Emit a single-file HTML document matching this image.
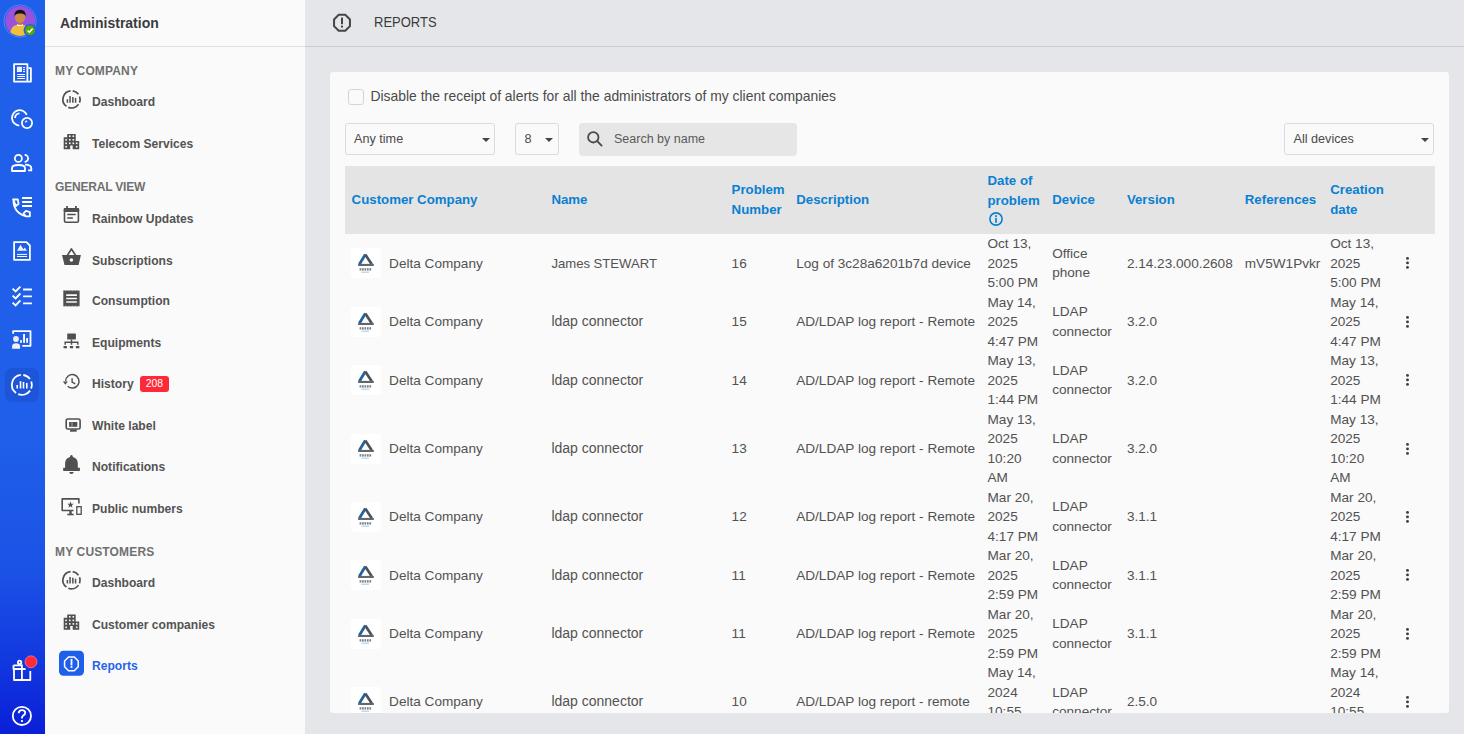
<!DOCTYPE html>
<html><head><meta charset="utf-8">
<style>
*{box-sizing:border-box;margin:0;padding:0}
html,body{width:1464px;height:734px;overflow:hidden}
body{font-family:"Liberation Sans",sans-serif;background:#e5e6ea;position:relative;color:#4a4a4a}
.rail{position:absolute;left:0;top:0;width:45px;height:734px;background:linear-gradient(to bottom,#1f5fe9 0%,#1f5fe9 60%,#1b52e6 78%,#1238df 90%,#0a1fd8 100%)}
.rail svg{position:absolute}
.side{position:absolute;left:45px;top:0;width:260px;height:734px;background:#fafafa}
.side .hd{position:absolute;left:0;top:0;width:260px;height:47px;border-bottom:1px solid #e3e3e3}
.side .hd span{position:absolute;left:15px;top:15px;font-weight:bold;font-size:14px;color:#3c3c3c;line-height:17px;transform:scaleY(1.07);transform-origin:0 13.3px}
.sec{position:absolute;left:10px;font-weight:bold;font-size:12px;letter-spacing:0.15px;color:#707070;line-height:14px;white-space:nowrap;transform:scaleY(1.05);transform-origin:0 11px}
.it{position:absolute;left:47px;font-weight:bold;font-size:12.1px;color:#535353;line-height:14px;white-space:nowrap;transform:scaleY(1.12);transform-origin:0 11px}
.side svg{position:absolute}
.main{position:absolute;left:305px;top:0;width:1159px;height:734px}
.mhd{position:absolute;left:0;top:0;width:1159px;height:47px;border-bottom:1px solid #c9cace}
.mhd span{position:absolute;left:69px;top:16px;font-size:13px;color:#3c3c3c;line-height:14px;letter-spacing:0;transform:scaleY(1.1);transform-origin:0 11px}
.card{position:absolute;left:25px;top:72px;width:1119px;height:641px;background:#fafafa;border-radius:3px;overflow:hidden}

.chk{position:absolute;left:18px;top:17px;width:16px;height:16px;border:1px solid #d4d4d4;border-radius:3px;background:#fafafa}
.lbl{position:absolute;left:40.5px;top:16.4px;font-size:13.9px;line-height:17px;color:#4a4a4a;white-space:nowrap}
.sel{position:absolute;top:51px;height:32px;border:1px solid #dcdcdc;border-radius:3px;background:#fafafa}
.sel span{position:absolute;left:8px;top:7.6px;font-size:12.65px;line-height:15px;color:#4a4a4a;white-space:nowrap}
.sel i{position:absolute;top:14px;width:0;height:0;border-left:4px solid transparent;border-right:4px solid transparent;border-top:4.5px solid #444}
.srch{position:absolute;left:249px;top:51px;width:218px;height:32.5px;background:#e6e6e6;border-radius:4px}
.srch span{position:absolute;left:35px;top:9px;font-size:12.5px;line-height:15px;color:#5a5a5a;white-space:nowrap}
.srch svg{position:absolute;left:8px;top:8px}
.tbl{position:absolute;left:15px;top:94px;width:1090px;height:620px}
.th{position:absolute;left:0;top:0;width:1090px;height:68px;background:#e4e4e4}
.th .c{position:absolute;top:0;height:68px;display:flex;align-items:center;font-weight:bold;font-size:13.25px;line-height:19.6px;color:#0a80d2;white-space:nowrap}
.row{position:absolute;left:0;width:1090px}
.row .c{position:absolute;top:0;bottom:0;display:flex;align-items:center;font-size:13.6px;line-height:19.5px;color:#525252;white-space:nowrap}
.logo{display:block;flex:none}
.dots{display:block;width:5px;height:13px;position:relative}
.dots b{position:absolute;left:1.1px;width:2.9px;height:2.9px;border-radius:50%;background:#3d3d3d}
.dots b:nth-child(1){top:0.2px}.dots b:nth-child(2){top:4.7px}.dots b:nth-child(3){top:9.2px}
.ov{position:absolute;left:0;top:0;pointer-events:none}
</style></head><body>
<div class="rail"></div>
<div class="side">
  <div class="hd"><span>Administration</span></div>
  <div class="sec" style="top:63.7px">MY COMPANY</div>
  <div class="it" style="top:95.2px">Dashboard</div>
  <div class="it" style="top:137.1px">Telecom Services</div>
  <div class="sec" style="top:180.3px;letter-spacing:-0.2px">GENERAL VIEW</div>
  <div class="it" style="top:211.6px">Rainbow Updates</div>
  <div class="it" style="top:253.6px">Subscriptions</div>
  <div class="it" style="top:294.3px">Consumption</div>
  <div class="it" style="top:335.9px">Equipments</div>
  <div class="it" style="top:377.2px">History</div>
  <div style="position:absolute;left:95px;top:375.9px;width:28.9px;height:15.8px;background:#fe2a38;border-radius:3px;color:#fff;font-size:10.4px;line-height:12px;padding-top:2.4px;text-align:center">208</div>
  <div class="it" style="top:419.4px">White label</div>
  <div class="it" style="top:460.1px">Notifications</div>
  <div class="it" style="top:502.3px">Public numbers</div>
  <div class="sec" style="top:544.9px">MY CUSTOMERS</div>
  <div class="it" style="top:575.7px">Dashboard</div>
  <div class="it" style="top:618px">Customer companies</div>
  <div class="it" style="top:658.6px;color:#2563eb">Reports</div>
</div>
<div class="main">
  <div class="mhd"><span>REPORTS</span></div>
  <div class="card">
    <div class="chk"></div>
    <div class="lbl">Disable the receipt of alerts for all the administrators of my client companies</div>
    <div class="sel" style="left:15px;width:150px"><span>Any time</span><i style="left:136px"></i></div>
    <div class="sel" style="left:185px;width:44px"><span style="left:8.5px">8</span><i style="left:29.2px"></i></div>
    <div class="srch"><svg width="16" height="16" viewBox="0 0 16 16"><circle cx="6.3" cy="6.3" r="5.2" fill="none" stroke="#4a4a4a" stroke-width="1.8"/><path d="M10.2 10.2 L14.6 14.6" stroke="#4a4a4a" stroke-width="1.9" stroke-linecap="round"/></svg><span>Search by name</span></div>
    <div class="sel" style="left:954px;width:150px"><span style="left:8.5px">All devices</span><i style="left:136px"></i></div>
    <div class="tbl">
      <div class="th">
        <div class="c" style="left:6.6px">Customer Company</div>
        <div class="c" style="left:206.4px">Name</div>
        <div class="c" style="left:386.6px">Problem<br>Number</div>
        <div class="c" style="left:451.2px">Description</div>
        <div class="c" style="left:642.5px"><div style="position:relative;top:-1.5px">Date of<br>problem<svg width="14" height="14" viewBox="0 0 14 14" style="display:block;margin:2px 0 0 1px"><circle cx="7" cy="7" r="6.1" fill="none" stroke="#0a80d2" stroke-width="1.6"/><rect x="6.15" y="3.2" width="1.7" height="1.8" fill="#0a80d2"/><rect x="6.15" y="5.9" width="1.7" height="4.9" fill="#0a80d2"/></svg></div></div>
        <div class="c" style="left:707.2px">Device</div>
        <div class="c" style="left:781.9px">Version</div>
        <div class="c" style="left:899.8px">References</div>
        <div class="c" style="left:985.2px">Creation<br>date</div>
      </div>
<div class="row" style="top:68.00px;height:58.50px"><div class="c" style="left:6.1px"><svg class="logo" width="30" height="30" viewBox="0 0 30 30"><rect width="30" height="30" rx="3" fill="#fff"/><path d="M8.4 16.2 L14.3 6.6" stroke="#23629e" stroke-width="2.8" fill="none"/><path d="M14.3 6.6 L20.7 16.2" stroke="#49525b" stroke-width="2.7" fill="none"/><rect x="7.1" y="15.9" width="15.7" height="2.1" fill="#62676c"/><rect x="8.60" y="20.2" width="1.7" height="2.4" fill="#7d8186"/><rect x="11.05" y="20.2" width="1.7" height="2.4" fill="#7d8186"/><rect x="13.50" y="20.2" width="1.7" height="2.4" fill="#7d8186"/><rect x="15.95" y="20.2" width="1.7" height="2.4" fill="#7d8186"/><rect x="18.40" y="20.2" width="1.7" height="2.4" fill="#7d8186"/><rect x="10.4" y="23.6" width="7.6" height="1.2" fill="#b0d2ea"/></svg><span style="margin-left:8px">Delta Company</span></div><div class="c" style="left:206.4px;font-size:13.1px">James STEWART</div><div class="c " style="left:386.6px">16</div><div class="c " style="left:451.2px">Log of 3c28a6201b7d device</div><div class="c " style="left:642.5px">Oct 13,<br>2025<br>5:00 PM</div><div class="c " style="left:707.2px">Office<br>phone</div><div class="c " style="left:781.9px">2.14.23.000.2608</div><div class="c " style="left:899.8px">mV5W1Pvkr</div><div class="c " style="left:985.2px">Oct 13,<br>2025<br>5:00 PM</div><div class="c" style="left:1059.8px"><svg width="6" height="14" viewBox="0 0 6 14" style="display:block"><circle cx="2.5" cy="2.4" r="1.45" fill="#3d3d3d"/><circle cx="2.5" cy="6.9" r="1.45" fill="#3d3d3d"/><circle cx="2.5" cy="11.4" r="1.45" fill="#3d3d3d"/></svg></div></div>
<div class="row" style="top:126.50px;height:58.50px"><div class="c" style="left:6.1px"><svg class="logo" width="30" height="30" viewBox="0 0 30 30"><rect width="30" height="30" rx="3" fill="#fff"/><path d="M8.4 16.2 L14.3 6.6" stroke="#23629e" stroke-width="2.8" fill="none"/><path d="M14.3 6.6 L20.7 16.2" stroke="#49525b" stroke-width="2.7" fill="none"/><rect x="7.1" y="15.9" width="15.7" height="2.1" fill="#62676c"/><rect x="8.60" y="20.2" width="1.7" height="2.4" fill="#7d8186"/><rect x="11.05" y="20.2" width="1.7" height="2.4" fill="#7d8186"/><rect x="13.50" y="20.2" width="1.7" height="2.4" fill="#7d8186"/><rect x="15.95" y="20.2" width="1.7" height="2.4" fill="#7d8186"/><rect x="18.40" y="20.2" width="1.7" height="2.4" fill="#7d8186"/><rect x="10.4" y="23.6" width="7.6" height="1.2" fill="#b0d2ea"/></svg><span style="margin-left:8px">Delta Company</span></div><div class="c" style="left:206.4px;font-size:14.0px">ldap connector</div><div class="c " style="left:386.6px">15</div><div class="c " style="left:451.2px">AD/LDAP log report - Remote</div><div class="c " style="left:642.5px">May 14,<br>2025<br>4:47 PM</div><div class="c " style="left:707.2px">LDAP<br>connector</div><div class="c " style="left:781.9px">3.2.0</div><div class="c " style="left:985.2px">May 14,<br>2025<br>4:47 PM</div><div class="c" style="left:1059.8px"><svg width="6" height="14" viewBox="0 0 6 14" style="display:block"><circle cx="2.5" cy="2.4" r="1.45" fill="#3d3d3d"/><circle cx="2.5" cy="6.9" r="1.45" fill="#3d3d3d"/><circle cx="2.5" cy="11.4" r="1.45" fill="#3d3d3d"/></svg></div></div>
<div class="row" style="top:185.00px;height:58.50px"><div class="c" style="left:6.1px"><svg class="logo" width="30" height="30" viewBox="0 0 30 30"><rect width="30" height="30" rx="3" fill="#fff"/><path d="M8.4 16.2 L14.3 6.6" stroke="#23629e" stroke-width="2.8" fill="none"/><path d="M14.3 6.6 L20.7 16.2" stroke="#49525b" stroke-width="2.7" fill="none"/><rect x="7.1" y="15.9" width="15.7" height="2.1" fill="#62676c"/><rect x="8.60" y="20.2" width="1.7" height="2.4" fill="#7d8186"/><rect x="11.05" y="20.2" width="1.7" height="2.4" fill="#7d8186"/><rect x="13.50" y="20.2" width="1.7" height="2.4" fill="#7d8186"/><rect x="15.95" y="20.2" width="1.7" height="2.4" fill="#7d8186"/><rect x="18.40" y="20.2" width="1.7" height="2.4" fill="#7d8186"/><rect x="10.4" y="23.6" width="7.6" height="1.2" fill="#b0d2ea"/></svg><span style="margin-left:8px">Delta Company</span></div><div class="c" style="left:206.4px;font-size:14.0px">ldap connector</div><div class="c " style="left:386.6px">14</div><div class="c " style="left:451.2px">AD/LDAP log report - Remote</div><div class="c " style="left:642.5px">May 13,<br>2025<br>1:44 PM</div><div class="c " style="left:707.2px">LDAP<br>connector</div><div class="c " style="left:781.9px">3.2.0</div><div class="c " style="left:985.2px">May 13,<br>2025<br>1:44 PM</div><div class="c" style="left:1059.8px"><svg width="6" height="14" viewBox="0 0 6 14" style="display:block"><circle cx="2.5" cy="2.4" r="1.45" fill="#3d3d3d"/><circle cx="2.5" cy="6.9" r="1.45" fill="#3d3d3d"/><circle cx="2.5" cy="11.4" r="1.45" fill="#3d3d3d"/></svg></div></div>
<div class="row" style="top:243.50px;height:78.00px"><div class="c" style="left:6.1px"><svg class="logo" width="30" height="30" viewBox="0 0 30 30"><rect width="30" height="30" rx="3" fill="#fff"/><path d="M8.4 16.2 L14.3 6.6" stroke="#23629e" stroke-width="2.8" fill="none"/><path d="M14.3 6.6 L20.7 16.2" stroke="#49525b" stroke-width="2.7" fill="none"/><rect x="7.1" y="15.9" width="15.7" height="2.1" fill="#62676c"/><rect x="8.60" y="20.2" width="1.7" height="2.4" fill="#7d8186"/><rect x="11.05" y="20.2" width="1.7" height="2.4" fill="#7d8186"/><rect x="13.50" y="20.2" width="1.7" height="2.4" fill="#7d8186"/><rect x="15.95" y="20.2" width="1.7" height="2.4" fill="#7d8186"/><rect x="18.40" y="20.2" width="1.7" height="2.4" fill="#7d8186"/><rect x="10.4" y="23.6" width="7.6" height="1.2" fill="#b0d2ea"/></svg><span style="margin-left:8px">Delta Company</span></div><div class="c" style="left:206.4px;font-size:14.0px">ldap connector</div><div class="c " style="left:386.6px">13</div><div class="c " style="left:451.2px">AD/LDAP log report - Remote</div><div class="c " style="left:642.5px">May 13,<br>2025<br>10:20<br>AM</div><div class="c " style="left:707.2px">LDAP<br>connector</div><div class="c " style="left:781.9px">3.2.0</div><div class="c " style="left:985.2px">May 13,<br>2025<br>10:20<br>AM</div><div class="c" style="left:1059.8px"><svg width="6" height="14" viewBox="0 0 6 14" style="display:block"><circle cx="2.5" cy="2.4" r="1.45" fill="#3d3d3d"/><circle cx="2.5" cy="6.9" r="1.45" fill="#3d3d3d"/><circle cx="2.5" cy="11.4" r="1.45" fill="#3d3d3d"/></svg></div></div>
<div class="row" style="top:321.50px;height:58.50px"><div class="c" style="left:6.1px"><svg class="logo" width="30" height="30" viewBox="0 0 30 30"><rect width="30" height="30" rx="3" fill="#fff"/><path d="M8.4 16.2 L14.3 6.6" stroke="#23629e" stroke-width="2.8" fill="none"/><path d="M14.3 6.6 L20.7 16.2" stroke="#49525b" stroke-width="2.7" fill="none"/><rect x="7.1" y="15.9" width="15.7" height="2.1" fill="#62676c"/><rect x="8.60" y="20.2" width="1.7" height="2.4" fill="#7d8186"/><rect x="11.05" y="20.2" width="1.7" height="2.4" fill="#7d8186"/><rect x="13.50" y="20.2" width="1.7" height="2.4" fill="#7d8186"/><rect x="15.95" y="20.2" width="1.7" height="2.4" fill="#7d8186"/><rect x="18.40" y="20.2" width="1.7" height="2.4" fill="#7d8186"/><rect x="10.4" y="23.6" width="7.6" height="1.2" fill="#b0d2ea"/></svg><span style="margin-left:8px">Delta Company</span></div><div class="c" style="left:206.4px;font-size:14.0px">ldap connector</div><div class="c " style="left:386.6px">12</div><div class="c " style="left:451.2px">AD/LDAP log report - Remote</div><div class="c " style="left:642.5px">Mar 20,<br>2025<br>4:17 PM</div><div class="c " style="left:707.2px">LDAP<br>connector</div><div class="c " style="left:781.9px">3.1.1</div><div class="c " style="left:985.2px">Mar 20,<br>2025<br>4:17 PM</div><div class="c" style="left:1059.8px"><svg width="6" height="14" viewBox="0 0 6 14" style="display:block"><circle cx="2.5" cy="2.4" r="1.45" fill="#3d3d3d"/><circle cx="2.5" cy="6.9" r="1.45" fill="#3d3d3d"/><circle cx="2.5" cy="11.4" r="1.45" fill="#3d3d3d"/></svg></div></div>
<div class="row" style="top:380.00px;height:58.50px"><div class="c" style="left:6.1px"><svg class="logo" width="30" height="30" viewBox="0 0 30 30"><rect width="30" height="30" rx="3" fill="#fff"/><path d="M8.4 16.2 L14.3 6.6" stroke="#23629e" stroke-width="2.8" fill="none"/><path d="M14.3 6.6 L20.7 16.2" stroke="#49525b" stroke-width="2.7" fill="none"/><rect x="7.1" y="15.9" width="15.7" height="2.1" fill="#62676c"/><rect x="8.60" y="20.2" width="1.7" height="2.4" fill="#7d8186"/><rect x="11.05" y="20.2" width="1.7" height="2.4" fill="#7d8186"/><rect x="13.50" y="20.2" width="1.7" height="2.4" fill="#7d8186"/><rect x="15.95" y="20.2" width="1.7" height="2.4" fill="#7d8186"/><rect x="18.40" y="20.2" width="1.7" height="2.4" fill="#7d8186"/><rect x="10.4" y="23.6" width="7.6" height="1.2" fill="#b0d2ea"/></svg><span style="margin-left:8px">Delta Company</span></div><div class="c" style="left:206.4px;font-size:14.0px">ldap connector</div><div class="c " style="left:386.6px">11</div><div class="c " style="left:451.2px">AD/LDAP log report - Remote</div><div class="c " style="left:642.5px">Mar 20,<br>2025<br>2:59 PM</div><div class="c " style="left:707.2px">LDAP<br>connector</div><div class="c " style="left:781.9px">3.1.1</div><div class="c " style="left:985.2px">Mar 20,<br>2025<br>2:59 PM</div><div class="c" style="left:1059.8px"><svg width="6" height="14" viewBox="0 0 6 14" style="display:block"><circle cx="2.5" cy="2.4" r="1.45" fill="#3d3d3d"/><circle cx="2.5" cy="6.9" r="1.45" fill="#3d3d3d"/><circle cx="2.5" cy="11.4" r="1.45" fill="#3d3d3d"/></svg></div></div>
<div class="row" style="top:438.50px;height:58.50px"><div class="c" style="left:6.1px"><svg class="logo" width="30" height="30" viewBox="0 0 30 30"><rect width="30" height="30" rx="3" fill="#fff"/><path d="M8.4 16.2 L14.3 6.6" stroke="#23629e" stroke-width="2.8" fill="none"/><path d="M14.3 6.6 L20.7 16.2" stroke="#49525b" stroke-width="2.7" fill="none"/><rect x="7.1" y="15.9" width="15.7" height="2.1" fill="#62676c"/><rect x="8.60" y="20.2" width="1.7" height="2.4" fill="#7d8186"/><rect x="11.05" y="20.2" width="1.7" height="2.4" fill="#7d8186"/><rect x="13.50" y="20.2" width="1.7" height="2.4" fill="#7d8186"/><rect x="15.95" y="20.2" width="1.7" height="2.4" fill="#7d8186"/><rect x="18.40" y="20.2" width="1.7" height="2.4" fill="#7d8186"/><rect x="10.4" y="23.6" width="7.6" height="1.2" fill="#b0d2ea"/></svg><span style="margin-left:8px">Delta Company</span></div><div class="c" style="left:206.4px;font-size:14.0px">ldap connector</div><div class="c " style="left:386.6px">11</div><div class="c " style="left:451.2px">AD/LDAP log report - Remote</div><div class="c " style="left:642.5px">Mar 20,<br>2025<br>2:59 PM</div><div class="c " style="left:707.2px">LDAP<br>connector</div><div class="c " style="left:781.9px">3.1.1</div><div class="c " style="left:985.2px">Mar 20,<br>2025<br>2:59 PM</div><div class="c" style="left:1059.8px"><svg width="6" height="14" viewBox="0 0 6 14" style="display:block"><circle cx="2.5" cy="2.4" r="1.45" fill="#3d3d3d"/><circle cx="2.5" cy="6.9" r="1.45" fill="#3d3d3d"/><circle cx="2.5" cy="11.4" r="1.45" fill="#3d3d3d"/></svg></div></div>
<div class="row" style="top:497.00px;height:78.00px"><div class="c" style="left:6.1px"><svg class="logo" width="30" height="30" viewBox="0 0 30 30"><rect width="30" height="30" rx="3" fill="#fff"/><path d="M8.4 16.2 L14.3 6.6" stroke="#23629e" stroke-width="2.8" fill="none"/><path d="M14.3 6.6 L20.7 16.2" stroke="#49525b" stroke-width="2.7" fill="none"/><rect x="7.1" y="15.9" width="15.7" height="2.1" fill="#62676c"/><rect x="8.60" y="20.2" width="1.7" height="2.4" fill="#7d8186"/><rect x="11.05" y="20.2" width="1.7" height="2.4" fill="#7d8186"/><rect x="13.50" y="20.2" width="1.7" height="2.4" fill="#7d8186"/><rect x="15.95" y="20.2" width="1.7" height="2.4" fill="#7d8186"/><rect x="18.40" y="20.2" width="1.7" height="2.4" fill="#7d8186"/><rect x="10.4" y="23.6" width="7.6" height="1.2" fill="#b0d2ea"/></svg><span style="margin-left:8px">Delta Company</span></div><div class="c" style="left:206.4px;font-size:14.0px">ldap connector</div><div class="c " style="left:386.6px">10</div><div class="c " style="left:451.2px">AD/LDAP log report - remote</div><div class="c " style="left:642.5px">May 14,<br>2024<br>10:55<br>AM</div><div class="c " style="left:707.2px">LDAP<br>connector</div><div class="c " style="left:781.9px">2.5.0</div><div class="c " style="left:985.2px">May 14,<br>2024<br>10:55<br>AM</div><div class="c" style="left:1059.8px"><svg width="6" height="14" viewBox="0 0 6 14" style="display:block"><circle cx="2.5" cy="2.4" r="1.45" fill="#3d3d3d"/><circle cx="2.5" cy="6.9" r="1.45" fill="#3d3d3d"/><circle cx="2.5" cy="11.4" r="1.45" fill="#3d3d3d"/></svg></div></div>
    </div>
  </div>
</div>
<svg class="ov" width="1464" height="734" viewBox="0 0 1464 734"><circle cx="20" cy="21" r="16.2" fill="none" stroke="#4f86f2" stroke-width="1"/><clipPath id="avc"><circle cx="20.1" cy="20.9" r="15"/></clipPath><g clip-path="url(#avc)"><circle cx="20.1" cy="20.9" r="15" fill="#9a52de"/><path d="M9.8 37 Q9.8 26.2 16.5 25 L23.5 25 Q30.5 26.2 30.5 37 Z" fill="#efc03c"/><path d="M16.8 24.9 Q20 27.3 23.2 24.9 L22.4 24 L17.6 24 Z" fill="#fff"/><rect x="18.2" y="20.5" width="3.8" height="4.4" fill="#b9743e"/><ellipse cx="20.1" cy="17.2" rx="5.2" ry="5.6" fill="#cc8a4c"/><path d="M14.6 16.6 Q13.9 9.7 20.1 9.7 Q26.3 9.7 25.6 16.6 Q25 13.2 20.1 13.4 Q15.2 13.2 14.6 16.6 Z" fill="#141414"/></g><circle cx="30" cy="30.3" r="6.4" fill="#1f5fe9"/><circle cx="30" cy="30.3" r="4.9" fill="#5aa700"/><path d="M27.6 30.5 L29.4 32.2 L32.6 28.6" stroke="#fff" stroke-width="1.5" fill="none"/><path d="M14.1 64.1 H27.4 V81.7 H14.1 Z" stroke="#fff" fill="none" stroke-width="1.8" stroke-width="2" stroke-linejoin="round"/><path d="M28.4 68.2 H30.9 V81.7 H28" stroke="#fff" fill="none" stroke-width="1.8" stroke-width="2" stroke-linejoin="round"/><rect x="17.3" y="67.1" width="4.3" height="4.5" fill="#f0f0f0" stroke="#fff" stroke-width="0.8"/><path d="M23 67.6 H25 M23 69.6 H25 M23 71.6 H25 M17.2 74.5 H25 M17.2 76.5 H25 M17.2 78.5 H25" stroke="#fff" stroke-width="1"/><path d="M19.30 125.59A7.70 7.70 0 1 1 26.79 114.89" stroke="#fff" fill="none" stroke-width="1.8" transform="rotate(0)"/><path d="M15.10 117.90A4.60 4.60 0 0 1 19.54 113.30" stroke="#fff" fill="none" stroke-width="1.8" stroke-width="1.6"/><circle cx="27" cy="123" r="5.1" stroke="#fff" fill="none" stroke-width="1.8"/><path d="M25.2 122.3 L27 120.7" stroke="#fff" stroke-width="1.5"/><circle cx="18.4" cy="158.4" r="3.5" stroke="#fff" fill="none" stroke-width="1.8"/><path d="M12 171 V168.2 Q12 165 18.5 165 Q25 165 25 168.2 V171 Z" stroke="#fff" fill="none" stroke-width="1.8" stroke-linejoin="round"/><path d="M24.6 154.9 A3.5 3.5 0 0 1 24.6 161.9" stroke="#fff" fill="none" stroke-width="1.8"/><path d="M25 164.6 Q31.3 164.8 31.3 168 V170.4 H28.1" stroke="#fff" fill="none" stroke-width="1.8"/><path d="M22.1 198 H32 M22.1 202 H32 M22.1 206 H32" stroke="#fff" stroke-width="1.8"/><path d="M13.1 199.3 L17.8 199.5 L18.6 203.8 L15.9 206 Z" stroke="#fff" fill="none" stroke-width="1.8" stroke-width="1.7" stroke-linejoin="round"/><path d="M23.6 213.4 L25.9 210.9 L29.9 212.2 L29.9 216.3 L25.6 216.3 Z" stroke="#fff" fill="none" stroke-width="1.8" stroke-width="1.7" stroke-linejoin="round"/><path d="M13.4 201 Q13.8 208.8 18.8 212.8 Q22 215.6 26 216" stroke="#fff" fill="none" stroke-width="1.8" stroke-width="2.3"/><path d="M14.1 242.1 H26.5 L29.9 245.5 V259.9 H14.1 Z" stroke="#fff" fill="none" stroke-width="1.8" stroke-width="2" stroke-linejoin="round"/><path d="M17 250.8 L20.5 244.8 L23.4 249.2 L24.8 247.4 L27 250.8 Z" fill="#f2f2f2"/><path d="M17 254.4 H27 M17 256.5 H27" stroke="#fff" stroke-width="1"/><path d="M12.6 288.6 L15.6 291.4 L20.4 286.6 M12.6 295.6 L15.6 298.4 L20.4 293.5 M12.6 302.6 L15.6 305.4 L20.4 300.4" stroke="#fff" fill="none" stroke-width="1.9"/><path d="M23.1 289.5 H31.9 M23.1 296.4 H31.9 M23.1 303.4 H31.9" stroke="#fff" stroke-width="1.9"/><path d="M13.1 333.8 V331.1 H30.5 V345.8 H22.3" stroke="#fff" fill="none" stroke-width="1.8" stroke-width="1.9" stroke-linejoin="round"/><circle cx="16" cy="339" r="2.9" fill="#f0f0f0"/><path d="M12.1 348.7 V346.5 Q12.1 343.2 16.1 343.2 Q20.1 343.2 20.1 346.5 V348.7 Z" fill="#f0f0f0"/><rect x="20.1" y="340.1" width="1.8" height="2.7" fill="#fff"/><rect x="23.1" y="334" width="1.9" height="8.8" fill="#fff"/><rect x="26.2" y="338.1" width="1.8" height="4.7" fill="#fff"/><rect x="5" y="368" width="34" height="34" rx="7" fill="#1d55d8"/><path d="M16.02 392.99A10.00 10.00 0 0 1 20.85 374.95M30.09 390.64A10.00 10.00 0 0 1 18.15 394.17M31.30 381.48A10.00 10.00 0 0 1 31.17 388.65M23.29 375.00A10.00 10.00 0 0 1 29.99 379.02" stroke="#fff" fill="none" stroke-width="1.8"/><path d="M17.2 385.1 V388.6 M20.5 381.2 V388.6 M23.5 382.1 V388.6 M26.8 383 V388.6" stroke="#fff" stroke-width="1.6"/><path d="M13.5 665.3 H22 M13.5 665.3 V669 H21.9 M14 669.5 V680 H30.3 V671.1 M21.9 664.5 V680 M21.9 669 H25.6" stroke="#fff" fill="none" stroke-width="1.8" stroke-width="1.8" stroke-linejoin="round"/><circle cx="19.6" cy="662.4" r="1.7" stroke="#fff" fill="none" stroke-width="1.8" stroke-width="1.4"/><circle cx="31" cy="661.8" r="6" fill="#ff2b3a" stroke="#ffb0b5" stroke-width="0.5"/><circle cx="21.9" cy="715.9" r="9.1" stroke="#fff" fill="none" stroke-width="1.8"/><path d="M18.7 713.3 Q18.9 710.1 22 710.1 Q25.2 710.1 25.2 712.8 Q25.2 714.6 23.2 715.6 Q21.9 716.4 21.9 718.4" stroke="#fff" fill="none" stroke-width="1.8"/><rect x="21" y="720.1" width="1.9" height="1.9" fill="#fff"/><path d="M66.45 106.36A8.60 8.60 0 0 1 70.60 90.85M78.54 104.33A8.60 8.60 0 0 1 68.28 107.37M79.58 96.46A8.60 8.60 0 0 1 79.47 102.62M72.70 90.88A8.60 8.60 0 0 1 78.46 94.35" stroke="#505050" fill="none" stroke-width="1.7"/><path d="M67.4 99.2 V102.8M70.05 96.1 V102.8M72.85 96.9 V102.8M75.55 98.0 V102.8" stroke="#505050" fill="none" stroke-width="1.5"/><path d="M63.7 137.2 H67.2 V133.9 H75.7 V141 H79.2 V149.2 H72.7 V145.5 H70.2 V149.2 H63.7 Z" fill="#505050"/><rect x="69.0" y="135.4" width="1.6" height="1.6" fill="#fafafa"/><rect x="72.5" y="135.4" width="1.6" height="1.6" fill="#fafafa"/><rect x="65.3" y="139.0" width="1.6" height="1.6" fill="#fafafa"/><rect x="69.0" y="139.0" width="1.6" height="1.6" fill="#fafafa"/><rect x="72.5" y="139.0" width="1.6" height="1.6" fill="#fafafa"/><rect x="65.3" y="142.5" width="1.6" height="1.6" fill="#fafafa"/><rect x="69.0" y="142.5" width="1.6" height="1.6" fill="#fafafa"/><rect x="72.5" y="142.5" width="1.6" height="1.6" fill="#fafafa"/><rect x="75.9" y="142.5" width="1.6" height="1.6" fill="#fafafa"/><rect x="65.3" y="145.9" width="1.6" height="1.6" fill="#fafafa"/><rect x="75.9" y="145.9" width="1.6" height="1.6" fill="#fafafa"/><rect x="64.5" y="208.7" width="13.9" height="13.6" rx="1.3" stroke="#505050" fill="none" stroke-width="1.6"/><rect x="63.7" y="207.9" width="15.5" height="4" rx="1" fill="#505050"/><rect x="66.2" y="206" width="1.7" height="2.5" fill="#505050"/><rect x="75" y="206" width="1.8" height="2.5" fill="#505050"/><path d="M67.2 214.4 H75.7 M67.2 218.1 H72.9" stroke="#505050" fill="none" stroke-width="1.5"/><path d="M62 255 H80.9 L78.6 265.1 H64.5 Z" fill="#505050"/><path d="M67.4 255.4 L71.4 249 L75.6 255.4" stroke="#505050" fill="none" stroke-width="1.7" stroke-linejoin="round"/><circle cx="71.4" cy="260" r="1.8" fill="#fafafa"/><path d="M63.3 290.4 H79.6 V306.4 H63.3 Z" fill="#505050"/><path d="M66.2 295.1 H76.9 M66.2 298.5 H76.9 M66.2 302 H76.9" stroke="#fafafa" stroke-width="1.6"/><path d="M64.93 290.4 l0.8 0.8 l0.8 -0.8 ZM68.19 290.4 l0.8 0.8 l0.8 -0.8 ZM71.45 290.4 l0.8 0.8 l0.8 -0.8 ZM74.71 290.4 l0.8 0.8 l0.8 -0.8 ZM77.97 290.4 l0.8 0.8 l0.8 -0.8 ZM64.93 306.4 l0.8 -0.8 l0.8 0.8 ZM68.19 306.4 l0.8 -0.8 l0.8 0.8 ZM71.45 306.4 l0.8 -0.8 l0.8 0.8 ZM74.71 306.4 l0.8 -0.8 l0.8 0.8 ZM77.97 306.4 l0.8 -0.8 l0.8 0.8 Z" fill="#fafafa"/><rect x="67.2" y="333.5" width="8.7" height="6.1" rx="0.6" fill="#505050"/><path d="M71.5 339.6 V344.7 M65.2 344.7 V342.3 H77.8 V344.7" stroke="#505050" fill="none" stroke-width="1.5"/><rect x="63.5" y="345.9" width="3.5" height="2.4" rx="0.5" fill="#505050"/><rect x="69.8" y="345.9" width="3.3" height="2.4" rx="0.5" fill="#505050"/><rect x="75.9" y="345.9" width="3.5" height="2.4" rx="0.5" fill="#505050"/><path d="M65.6 381.3 A6.7 6.7 0 1 1 67.7 386.2" stroke="#505050" fill="none" stroke-width="1.5"/><path d="M62.8 381.6 H67.9 L65.35 384.8 Z" fill="#505050"/><path d="M72.1 378.2 V382.2 L75.2 383.9" stroke="#505050" fill="none" stroke-width="1.4"/><rect x="66.2" y="419" width="13.9" height="10" rx="1.6" stroke="#505050" fill="none" stroke-width="1.6"/><rect x="69.1" y="422" width="8.2" height="4.8" fill="#505050"/><rect x="71.6" y="422" width="0.8" height="4.8" fill="#bdbdbd"/><rect x="70" y="429.6" width="6.7" height="2.1" fill="#505050"/><path d="M70 457 Q70 454.9 71.45 454.9 Q72.9 454.9 72.9 457 Q77.8 458.3 77.8 463.5 V467.8 H79.9 V470.9 H63.2 V467.8 H65.1 V463.5 Q65.1 458.3 70 457 Z" fill="#505050"/><path d="M69.3 472 H73.6 Q73.6 474 71.45 474 Q69.3 474 69.3 472 Z" fill="#505050"/><path d="M78.9 503.6 V498.9 H62.2 V510.5 H73.6" stroke="#505050" fill="none" stroke-width="1.6" stroke-linejoin="round"/><rect x="69.3" y="510.8" width="2.4" height="3.2" fill="#505050"/><rect x="67.3" y="513.7" width="6.4" height="1.6" fill="#505050"/><polygon points="70.50,501.50 71.35,503.73 73.73,503.85 71.88,505.35 72.50,507.65 70.50,506.35 68.50,507.65 69.12,505.35 67.27,503.85 69.65,503.73" fill="#505050"/><rect x="76.8" y="506.7" width="4.4" height="7.6" stroke="#505050" fill="none" stroke-width="1.3"/><path d="M66.45 587.16A8.60 8.60 0 0 1 70.60 571.65M78.54 585.13A8.60 8.60 0 0 1 68.28 588.17M79.58 577.26A8.60 8.60 0 0 1 79.47 583.42M72.70 571.68A8.60 8.60 0 0 1 78.46 575.15" stroke="#505050" fill="none" stroke-width="1.7"/><path d="M67.4 580.0 V583.6M70.05 576.9 V583.6M72.85 577.7 V583.6M75.55 578.8 V583.6" stroke="#505050" fill="none" stroke-width="1.5"/><path transform="translate(0,480.6)" d="M63.7 137.2 H67.2 V133.9 H75.7 V141 H79.2 V149.2 H72.7 V145.5 H70.2 V149.2 H63.7 Z" fill="#505050"/><rect transform="translate(0,480.6)" x="69.0" y="135.4" width="1.6" height="1.6" fill="#fafafa"/><rect transform="translate(0,480.6)" x="72.5" y="135.4" width="1.6" height="1.6" fill="#fafafa"/><rect transform="translate(0,480.6)" x="65.3" y="139.0" width="1.6" height="1.6" fill="#fafafa"/><rect transform="translate(0,480.6)" x="69.0" y="139.0" width="1.6" height="1.6" fill="#fafafa"/><rect transform="translate(0,480.6)" x="72.5" y="139.0" width="1.6" height="1.6" fill="#fafafa"/><rect transform="translate(0,480.6)" x="65.3" y="142.5" width="1.6" height="1.6" fill="#fafafa"/><rect transform="translate(0,480.6)" x="69.0" y="142.5" width="1.6" height="1.6" fill="#fafafa"/><rect transform="translate(0,480.6)" x="72.5" y="142.5" width="1.6" height="1.6" fill="#fafafa"/><rect transform="translate(0,480.6)" x="75.9" y="142.5" width="1.6" height="1.6" fill="#fafafa"/><rect transform="translate(0,480.6)" x="65.3" y="145.9" width="1.6" height="1.6" fill="#fafafa"/><rect transform="translate(0,480.6)" x="75.9" y="145.9" width="1.6" height="1.6" fill="#fafafa"/><rect x="59" y="650.8" width="25" height="25" rx="4.5" fill="#1f5fe9"/><polygon points="78.24,666.73 74.23,670.74 68.57,670.74 64.56,666.73 64.56,661.07 68.57,657.06 74.23,657.06 78.24,661.07" fill="none" stroke="#fff" stroke-width="1.5"/><rect x="70.6" y="658.9" width="1.8" height="6.5" fill="#fff"/><rect x="70.6" y="666.1" width="1.8" height="1.8" fill="#fff"/><polygon points="349.95,26.09 345.29,30.75 338.71,30.75 334.05,26.09 334.05,19.51 338.71,14.85 345.29,14.85 349.95,19.51" fill="none" stroke="#454545" stroke-width="2"/><rect x="341" y="17.6" width="2" height="6.6" fill="#454545"/><rect x="341" y="25.6" width="2" height="2" fill="#454545"/></svg>
</body></html>
